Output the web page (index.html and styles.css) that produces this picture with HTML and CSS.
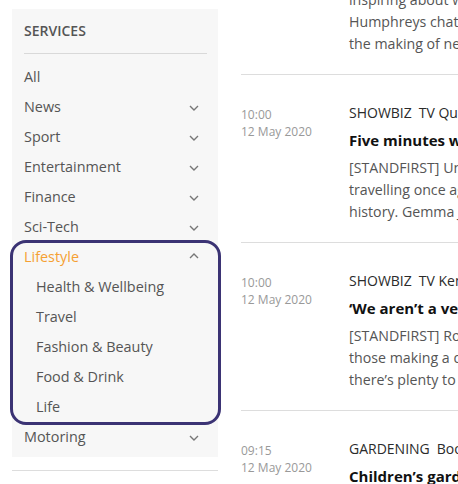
FILE: index.html
```html
<!DOCTYPE html>
<html lang="en">
<head>
  <meta charset="UTF-8">
  <meta name="viewport" content="width=device-width, initial-scale=1.0">
  <title>Services</title>
  <link rel="stylesheet" href="styles.css">
</head>
<body>
  <aside class="sidebar">
    <nav class="services">
      <h2>SERVICES</h2>
      <ul class="menu">
        <li class="item"><span>All</span></li>
        <li class="item"><span>News</span><svg class="chev" viewBox="0 0 10 6"><path d="M1 1l4 4 4-4"/></svg></li>
        <li class="item"><span>Sport</span><svg class="chev" viewBox="0 0 10 6"><path d="M1 1l4 4 4-4"/></svg></li>
        <li class="item"><span>Entertainment</span><svg class="chev" viewBox="0 0 10 6"><path d="M1 1l4 4 4-4"/></svg></li>
        <li class="item"><span>Finance</span><svg class="chev" viewBox="0 0 10 6"><path d="M1 1l4 4 4-4"/></svg></li>
        <li class="item"><span>Sci-Tech</span><svg class="chev" viewBox="0 0 10 6"><path d="M1 1l4 4 4-4"/></svg></li>
        <li class="group open">
          <div class="item active"><span>Lifestyle</span><svg class="chev" viewBox="0 0 10 6"><path d="M1 5l4-4 4 4"/></svg></div>
          <ul class="submenu">
            <li class="item sub">Health &amp; Wellbeing</li>
            <li class="item sub">Travel</li>
            <li class="item sub">Fashion &amp; Beauty</li>
            <li class="item sub">Food &amp; Drink</li>
            <li class="item sub">Life</li>
          </ul>
        </li>
        <li class="item"><span>Motoring</span><svg class="chev" viewBox="0 0 10 6"><path d="M1 1l4 4 4-4"/></svg></li>
      </ul>
    </nav>
    <hr class="rule">
  </aside>

  <main class="feed">
    <article class="story first">
      <div class="when">10:15<br>12 May 2020</div>
      <div class="body">
        <div class="cats"><span>SHOWBIZ</span><span>TV Interview</span></div>
        <h3>Inside the studio with the team</h3>
        <p>inspiring about watching John<br>Humphreys chat about his career and<br>the making of new programmes.</p>
      </div>
    </article>
    <article class="story">
      <div class="when">10:00<br>12 May 2020</div>
      <div class="body">
        <div class="cats"><span>SHOWBIZ</span><span>TV Quiz shows</span></div>
        <h3>Five minutes with the quizmaster</h3>
        <p>[STANDFIRST] Until we can start<br>travelling once again, enjoy a trip through<br>history. Gemma Jones takes the chair.</p>
      </div>
    </article>
    <article class="story">
      <div class="when">10:00<br>12 May 2020</div>
      <div class="body">
        <div class="cats"><span>SHOWBIZ</span><span>TV Kemp family</span></div>
        <h3>‘We aren’t a very showbiz family’</h3>
        <p>[STANDFIRST] Ross Kemp meets<br>those making a difference at home, and<br>there’s plenty to talk about this week.</p>
      </div>
    </article>
    <article class="story">
      <div class="when">09:15<br>12 May 2020</div>
      <div class="body">
        <div class="cats"><span>GARDENING</span><span>Books</span></div>
        <h3>Children’s garden projects</h3>
        <p>[STANDFIRST] Get the little ones<br>outdoors with these simple ideas.</p>
      </div>
    </article>
  </main>
</body>
</html>
```

FILE: styles.css
```css
/* Global */
body {
  margin: 0;
  font-family: "Open Sans", Arial, sans-serif;
  color: #555;
  background-color: #ffffff;
  display: flex;
  align-items: flex-start;
  gap: 23px;
  height: 484px;
  overflow: hidden;
}

ul {
  list-style: none;
  margin: 0;
  padding: 0;
}

/* Sidebar */
.sidebar {
  flex: 0 0 206px;
  margin-left: 12px;
  padding-top: 9px;
}

.services {
  background-color: #f7f7f7;
  padding: 12px 11px 6px 12px;
}

.services h2 {
  margin: 0;
  font-size: 14px;
  font-weight: 600;
  line-height: 20px;
  color: #555;
  padding-bottom: 12px;
  border-bottom: 1px solid #d9d9d9;
}

.menu {
  padding-top: 7px;
}

.item {
  display: flex;
  justify-content: space-between;
  align-items: center;
  height: 30px;
  padding-right: 8px;
  font-size: 14.4px;
  color: #555;
}

.item.active {
  color: #f5a033;
}

.item.sub {
  padding-left: 12px;
}

.chev {
  width: 10px;
  height: 6px;
  margin-top: 3px;
  fill: none;
  stroke: #777;
  stroke-width: 1.4;
}

.active .chev {
  margin-top: 0;
}

/* highlighted open group */
.group {
  position: relative;
}

.group::after {
  content: "";
  position: absolute;
  top: -1px;
  left: -14px;
  right: -14px;
  bottom: -4px;
  border: 3px solid #3b3374;
  border-radius: 16px;
}

.rule {
  margin: 13px 0 0;
  border: 0;
  border-top: 1px solid #ddd;
}

/* Feed */
.feed {
  flex: 1;
  min-width: 0;
  margin-top: -93px;
  overflow: hidden;
}

.story {
  display: flex;
  padding: 29px 0 19px;
  border-top: 1px solid #ddd;
  white-space: nowrap;
}

.story.first {
  border-top: 0;
}

.when {
  flex: 0 0 108px;
  padding-top: 2px;
  font-size: 12px;
  line-height: 17px;
  color: #999;
}

.cats {
  display: flex;
  gap: 7px;
  font-size: 14px;
  line-height: 18px;
  color: #2b2b2b;
}

.story h3 {
  margin: 7px 0 6px;
  font-size: 15px;
  font-weight: 700;
  line-height: 22px;
  color: #111;
}

.story p {
  margin: 0;
  font-size: 14.2px;
  line-height: 22px;
  color: #555;
}
```
